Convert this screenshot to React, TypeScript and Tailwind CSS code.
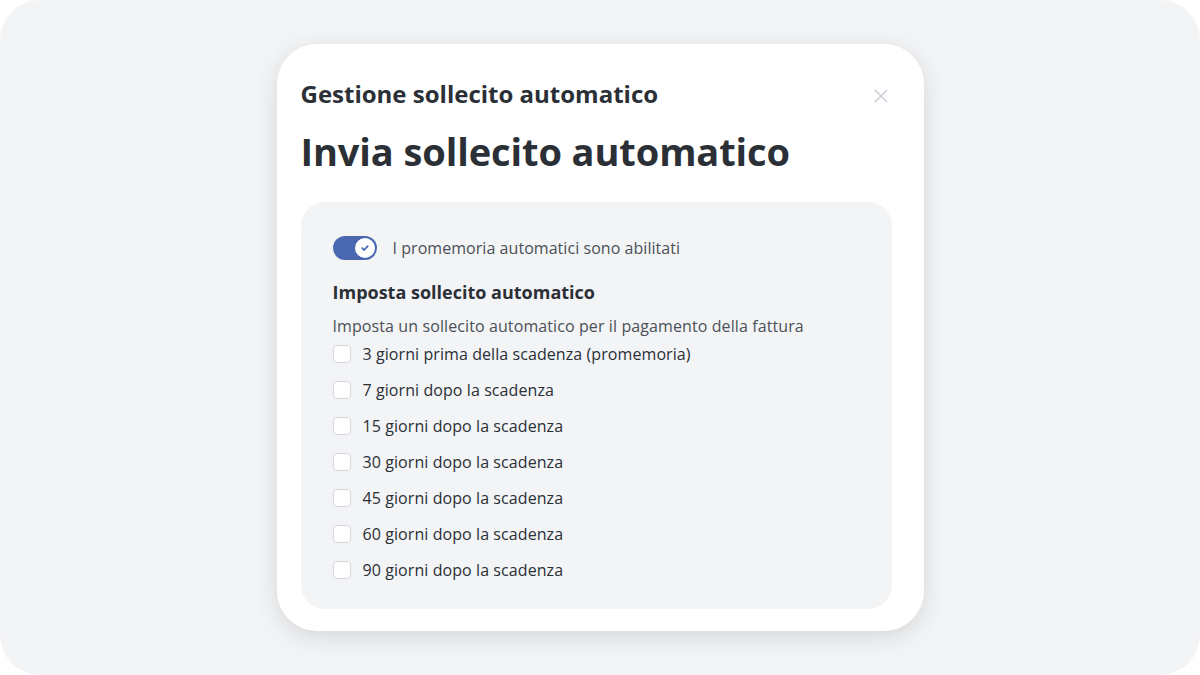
import React, { useState } from 'react';

const options = [
    '3 giorni prima della scadenza (promemoria)',
    '7 giorni dopo la scadenza',
    '15 giorni dopo la scadenza',
    '30 giorni dopo la scadenza',
    '45 giorni dopo la scadenza',
    '60 giorni dopo la scadenza',
    '90 giorni dopo la scadenza',
];

export default function App() {
    const [enabled, setEnabled] = useState(true);
    const [checked, setChecked] = useState<boolean[]>(options.map(() => false));

    return (
        <div className="w-[1200px] h-[675px] bg-white" style={{ fontFamily: '"Open Sans", "Liberation Sans", sans-serif' }}>
            <div className="w-full h-full rounded-[40px] bg-[#f3f4f6] flex items-center justify-center">
                <div className="relative w-[647px] rounded-[40px] bg-white pl-6 pr-8 pt-[34px] pb-[22px] shadow-[0_6px_24px_rgba(0,0,0,0.12)]">
                    {/* Close */}
                    <button className="absolute top-[45px] right-[36px] w-[14px] h-[14px] flex items-center justify-center text-[#cbd0d8]">
                        <svg width="14" height="14" viewBox="0 0 14 14" fill="none" stroke="currentColor" strokeWidth="1.6">
                            <path d="M1 1L13 13M13 1L1 13" />
                        </svg>
                    </button>

                    <h1 className="text-[24px] leading-8 font-bold text-[#2b2f36]">
                        Gestione sollecito automatico
                    </h1>
                    <h2 className="mt-[17px] text-[38px] leading-[48px] font-bold text-[#2b2f36] tracking-[-0.1px]">
                        Invia sollecito automatico
                    </h2>

                    <div className="mt-[27px] rounded-[24px] bg-[#f3f4f6] px-8 pt-[34px] pb-[21px]">
                        {/* Toggle */}
                        <div className="flex items-center gap-4 h-6">
                            <button
                                onClick={() => setEnabled(!enabled)}
                                className={`relative w-11 h-6 rounded-full flex items-center px-[2px] ${enabled ? 'bg-[#4a68b0] justify-end' : 'bg-gray-300 justify-start'}`}
                            >
                                <span className="w-5 h-5 rounded-full bg-white flex items-center justify-center">
                                    {enabled && (
                                        <svg width="10" height="10" viewBox="0 0 10 10" fill="none" stroke="#4a68b0" strokeWidth="1.8" strokeLinecap="round" strokeLinejoin="round">
                                            <path d="M2.3 5.2L4.2 7L7.7 3.2" />
                                        </svg>
                                    )}
                                </span>
                            </button>
                            <span className="text-[16px] text-[#4b5058] tracking-[0.05px]">I promemoria automatici sono abilitati</span>
                        </div>

                        <h3 className="mt-[18px] text-[18px] leading-7 font-bold text-[#2b2f36]">
                            Imposta sollecito automatico
                        </h3>
                        <p className="mt-[10px] text-[16px] leading-5 text-[#4b5058] tracking-[0.1px]">
                            Imposta un sollecito automatico per il pagamento della fattura
                        </p>

                        <div className="flex flex-col">
                            {options.map((opt, i) => (
                                <label key={opt} className="h-9 flex items-center gap-3 cursor-pointer">
                                    <span
                                        onClick={() => setChecked(checked.map((c, j) => (j === i ? !c : c)))}
                                        className={`w-[18px] h-[18px] rounded-[4px] border ${checked[i] ? 'bg-[#4a68b0] border-[#4a68b0]' : 'bg-white border-[#d5d8de]'}`}
                                    />
                                    <span className="text-[16px] text-[#2b2f36] tracking-[0.08px]">{opt}</span>
                                </label>
                            ))}
                        </div>
                    </div>
                </div>
            </div>
        </div>
    );
}
